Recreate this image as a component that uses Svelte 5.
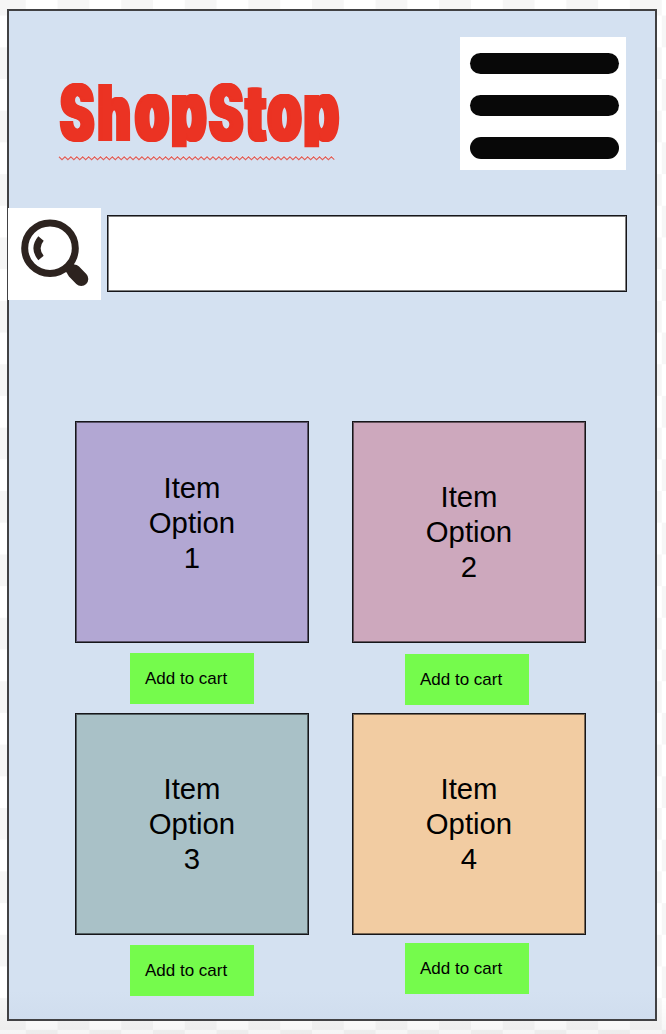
<script>
  const items = [
    { id: 1, tone: 'violet' },
    { id: 2, tone: 'rose' },
    { id: 3, tone: 'teal' },
    { id: 4, tone: 'peach' }
  ];
  const wave = 'M59 156.8' + Array.from({ length: 93 }, (_, i) => `L${62 + i * 2.96} ${i % 2 ? 156.8 : 159.6}`).join('');
  const spread = [-2.4, -1.2, 0, 1.2, 2.4];
</script>

<main class="phone">
  <header>
    <svg class="logo" viewBox="50 50 300 120" role="img" aria-label="ShopStop">
      <defs>
        <clipPath id="trim"><rect x="50" y="50" width="300" height="97.3" /></clipPath>
        <filter id="widen" filterUnits="userSpaceOnUse" x="50" y="50" width="300" height="120" color-interpolation-filters="sRGB">
          {#each spread as dx, i}
            <feOffset in="SourceGraphic" {dx} dy="0" result="o{i}" />
          {/each}
          <feMerge>
            {#each spread as _, i}
              <feMergeNode in="o{i}" />
            {/each}
          </feMerge>
        </filter>
      </defs>
      <g clip-path="url(#trim)">
        <g filter="url(#widen)">
          <text transform="translate(0 140.5) scale(.64 1)" x="94.3 152.8 210.9 267.5 327 384 418 474.8">Sh<tspan class="low">op</tspan>St<tspan class="low">op</tspan></text>
        </g>
      </g>
      <path class="glow" d={wave} transform="translate(0 -1)" />
      <path class="wave" d={wave} />
    </svg>
    <button class="menu" aria-label="Menu"><i></i><i></i><i></i></button>
  </header>

  <div class="search">
    <svg class="lens" viewBox="0 0 93 92">
      <circle cx="42" cy="40.2" r="25.3" fill="none" stroke="#2d231f" stroke-width="7" />
      <path d="M33 30.5Q25 40.2 33 50" fill="none" stroke="#2d231f" stroke-width="7" />
      <path d="M66 63.5L73.3 71" stroke="#2d231f" stroke-width="14" stroke-linecap="round" />
      <path d="M58 56.5L66 64" stroke="#2d231f" stroke-width="11" />
    </svg>
    <input aria-label="Search" />
  </div>

  <section class="grid">
    {#each items as item}
      <article class="n{item.id}">
        <div class="tile {item.tone}"><p>Item<br />Option<br />{item.id}</p></div>
        <button class="add">Add to cart</button>
      </article>
    {/each}
  </section>
</main>

<style>
  :global(body) {
    height: 1034px;
    overflow: hidden;
    background:
      linear-gradient(transparent 995px, rgba(0, 0, 0, .04) 1034px),
      repeating-conic-gradient(#fff 0 25%, #f6f6f6 0 50%) 25.8px 15.6px / 63.6px 63.4px;
  }
  * { box-sizing: border-box; }
  button, input { border: 0; border-radius: 0; padding: 0; margin: 0; display: block; }
  .phone {
    width: 650px;
    height: 1012px;
    margin: 9px 0 0 7px;
    border: 2px solid #414143;
    background: linear-gradient(#d4e1f1 980px, #d0ddee 1008px);
    font-family: "Liberation Sans", Arial, sans-serif;
    color: #000;
  }
  header {
    display: flex;
    justify-content: space-between;
    align-items: flex-start;
    height: 161px;
    margin-bottom: 36px;
    padding: 26px 29px 0 41px;
  }
  .logo { width: 300px; height: 120px; margin-top: 13px; overflow: visible; }
  .logo text {
    font: 900 79px Inter, sans-serif;
    fill: #eb3323;
  }
  .logo .low { font-size: 85px; }
  .wave { fill: none; stroke: #e0605a; stroke-width: 1.2; }
  .glow { fill: none; stroke: #fff; stroke-width: 1; opacity: .5; }
  .menu {
    width: 166px;
    height: 133px;
    background: #fff;
    padding: 15.5px 7px 0 9.5px;
    display: flex;
    flex-direction: column;
    gap: 20.8px;
  }
  .menu i { height: 21.6px; width: 149px; flex: none; border-radius: 11px; background: #080808; }
  .search { display: flex; align-items: flex-start; margin-left: -1px; }
  .lens { width: 93px; height: 92px; background: #fff; flex: none; }
  .search input, .tile {
    border: 1px solid #16161a;
    box-shadow: inset 0 0 0 1px rgba(0, 0, 0, .5);
  }
  .search input {
    width: 520px;
    height: 77px;
    margin: 7px 0 0 6px;
    background: #fff;
  }
  .grid {
    display: grid;
    grid-template-columns: 234px 234px;
    column-gap: 43px;
    grid-auto-rows: 292px;
    margin: 121px 0 0 66px;
  }
  .tile {
    height: 222px;
    padding-top: 57px;
    text-align: center;
  }
  .tile p { margin: 0; font-size: 29.3px; line-height: 35.2px; }
  .n1 .tile { padding-top: 48px; }
  .violet { background: #b2a7d3; }
  .rose { background: #cda8bd; }
  .teal { background: #a9c1c7; }
  .peach { background: #f2cca2; }
  .add {
    width: 124px;
    height: 51px;
    margin: 10px 0 0 55px;
    padding-left: 15px;
    text-align: left;
    background: #75fb4c;
    font: 17px "Liberation Sans", Arial, sans-serif;
    color: #000;
  }
  .n2 .add { margin: 11px 0 0 53px; }
  .n4 .add { margin: 8px 0 0 53px; }
</style>
